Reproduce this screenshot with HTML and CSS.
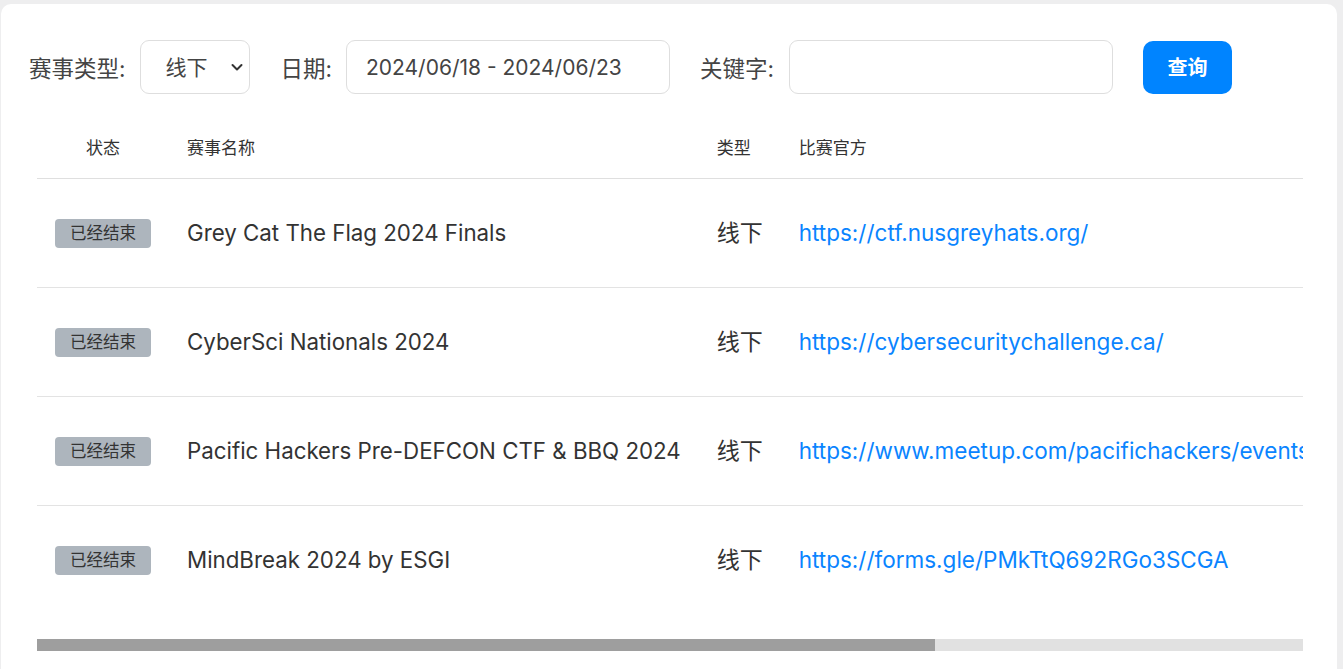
FILE: index.html
```html
<!DOCTYPE html>
<html lang="zh-CN">
<head>
<meta charset="utf-8">
<title>赛事列表</title>
<link rel="stylesheet" href="styles.css">
</head>
<body>
<div class="card">
  <form class="filters">
    <label class="label">赛事类型:</label>
    <div class="select-wrap">
      <select class="select"><option>线下</option><option>线上</option></select>
      <svg class="chev" width="14" height="14" viewBox="0 0 14 14"><path d="M2.5 5l4.5 4.5L11.5 5" fill="none" stroke="#333" stroke-width="2" stroke-linecap="round" stroke-linejoin="round"/></svg>
    </div>
    <label class="label label-gap">日期:</label>
    <input class="input" type="text" value="2024/06/18 - 2024/06/23">
    <label class="label label-gap2">关键字:</label>
    <input class="input" type="text" value="">
    <button class="btn" type="button">查询</button>
  </form>
  <div class="table-wrap">
    <table class="table">
      <thead>
        <tr><th class="c-status">状态</th><th>赛事名称</th><th>类型</th><th class="c-url">比赛官方</th></tr>
      </thead>
      <tbody>
        <tr><td class="c-status"><span class="badge">已经结束</span></td><td>Grey Cat The Flag 2024 Finals</td><td class="c-type">线下</td><td><a class="link" href="#">https://ctf.nusgreyhats.org/</a></td></tr>
        <tr><td class="c-status"><span class="badge">已经结束</span></td><td>CyberSci Nationals 2024</td><td class="c-type">线下</td><td><a class="link" href="#">https://cybersecuritychallenge.ca/</a></td></tr>
        <tr><td class="c-status"><span class="badge">已经结束</span></td><td>Pacific Hackers Pre-DEFCON CTF &amp; BBQ 2024</td><td class="c-type">线下</td><td><a class="link" href="#">https://www.meetup.com/pacifichackers/events/301329487/</a></td></tr>
        <tr><td class="c-status"><span class="badge">已经结束</span></td><td>MindBreak 2024 by ESGI</td><td class="c-type">线下</td><td><a class="link" href="#">https://forms.gle/PMkTtQ692RGo3SCGA</a></td></tr>
      </tbody>
    </table>
  </div>
  <div class="scrollbar"><div class="thumb"></div></div>
</div>
</body>
</html>
```

FILE: styles.css
```css
* { box-sizing: border-box; }
html, body { margin: 0; height: 100%; overflow: hidden; }
body {
  background: #eeeeef;
  padding: 4px 6px 0 1px;
  font-family: Inter, "Noto Sans CJK SC", sans-serif;
  color: #333;
}
.card {
  background: #fff;
  border-radius: 10px 10px 0 0;
  min-height: 700px;
  padding: 36px 34px 0 28px;
}
.filters {
  display: flex;
  align-items: center;
  height: 54px;
  margin: 0;
}
.label {
  font-size: 22.5px;
  color: #444;
  margin-right: 15px;
  white-space: nowrap;
}
.label-gap { margin-left: 30px; margin-right: 14px; }
.label-gap2 { margin-left: 30px; }
.select-wrap {
  position: relative;
  width: 110px;
  height: 54px;
}
.select {
  appearance: none;
  -webkit-appearance: none;
  width: 100%;
  height: 100%;
  border: 1px solid #dedede;
  border-radius: 9px;
  background: #fff;
  font-family: inherit;
  font-size: 21px;
  color: #444;
  padding: 0 0 0 24px;
  outline: none;
}
.chev {
  position: absolute;
  right: 6px;
  top: 20px;
  pointer-events: none;
}
.input {
  width: 324px;
  height: 54px;
  border: 1px solid #dedede;
  border-radius: 9px;
  padding: 0 19px;
  font-family: inherit;
  font-size: 21px;
  color: #444;
  outline: none;
  background: #fff;
}
.btn {
  margin-left: 30px;
  width: 89px;
  height: 53px;
  border: none;
  border-radius: 10px;
  background: #0084ff;
  color: #fff;
  font-family: inherit;
  font-size: 20px;
  font-weight: 700;
  padding: 0 0 2px;
}
.table-wrap {
  margin: 24px 0 0 8px;
  overflow: hidden;
}
.table {
  border-collapse: collapse;
  white-space: nowrap;
}
.table th {
  font-weight: 400;
  font-size: 17px;
  line-height: 24px;
  color: #333;
  text-align: left;
  padding: 18px;
  border-bottom: 1px solid #dfdfdf;
}
.table tbody tr { height: 109px; }
.table td {
  font-size: 22.3px;
  line-height: 28px;
  color: #333;
  padding: 0 18px;
  vertical-align: middle;
  border-bottom: 1px solid #e3e3e3;
}
.table tbody tr:last-child td { border-bottom: none; }
.table .c-status { text-align: center; }
.table .c-type { font-size: 23px; }
.table .c-url { width: 986px; }
.badge {
  display: inline-block;
  vertical-align: middle;
  background: #adb5bd;
  color: #333;
  font-size: 16.5px;
  line-height: 25px;
  padding: 2px 15px;
  border-radius: 4px;
}
.link {
  color: #0a84ff;
  text-decoration: none;
  font-size: 22.5px;
}
.scrollbar {
  margin: 24px 0 0 8px;
  height: 12px;
  background: #e1e1e1;
}
.thumb {
  width: 70.9%;
  height: 100%;
  background: #9e9e9e;
}
```
